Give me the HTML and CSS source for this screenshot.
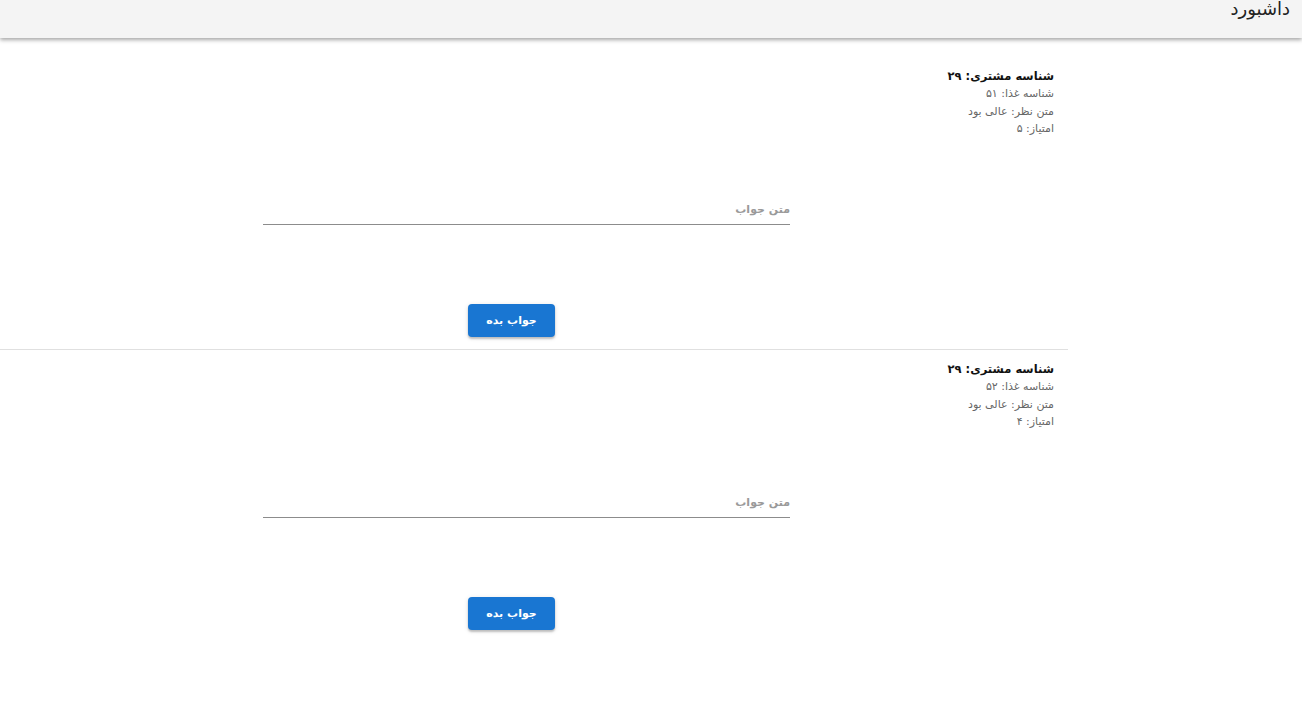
FILE: index.html
```html
<!DOCTYPE html>
<html lang="fa" dir="rtl">
<head>
<meta charset="utf-8">
<title>داشبورد</title>
<link rel="stylesheet" href="styles.css">
</head>
<body>
<header class="topbar">
  <h1 class="topbar-title">داشبورد</h1>
</header>
<main class="list">
  <section class="item">
    <div class="info">
      <div class="info-title">شناسه مشتری: ۲۹</div>
      <div class="info-line">شناسه غذا: ۵۱</div>
      <div class="info-line">متن نظر: عالی بود</div>
      <div class="info-line">امتیاز: ۵</div>
    </div>
    <form class="reply">
      <input class="reply-input" type="text" placeholder="متن جواب">
      <button class="reply-btn" type="button">جواب بده</button>
    </form>
  </section>
  <section class="item">
    <div class="info">
      <div class="info-title">شناسه مشتری: ۲۹</div>
      <div class="info-line">شناسه غذا: ۵۲</div>
      <div class="info-line">متن نظر: عالی بود</div>
      <div class="info-line">امتیاز: ۴</div>
    </div>
    <form class="reply">
      <input class="reply-input" type="text" placeholder="متن جواب">
      <button class="reply-btn" type="button">جواب بده</button>
    </form>
  </section>
</main>
</body>
</html>
```
FILE: styles.css
```css
* { box-sizing: border-box; }
html, body {
  margin: 0;
  padding: 0;
  background: #ffffff;
  font-family: "DejaVu Sans", "Noto Sans", sans-serif;
  color: #222;
}
.topbar {
  height: 38px;
  background: #f4f4f4;
  box-shadow: 0 2px 4px rgba(0,0,0,0.35);
  padding: 0 12px 0 0;
  position: relative;
  z-index: 2;
}
.topbar-title {
  margin: 0;
  font-size: 18px;
  font-weight: normal;
  line-height: 17px;
  color: #222;
}
.list {
  width: 1068px;
  margin-left: 0;
  margin-right: auto;
  padding-top: 19px;
}
.item {
  display: flex;
  flex-direction: row;
  align-items: flex-start;
  padding: 10px 14px 12px 0;
  border-bottom: 1px solid #e0e0e0;
}
.item:last-child { border-bottom: none; }
.info {
  width: 264px;
  text-align: right;
}
.info-title {
  font-size: 11.5px;
  font-weight: bold;
  line-height: 18px;
  color: #111;
}
.info-line {
  font-size: 11px;
  line-height: 17.5px;
  color: #666;
}
.reply {
  width: 527px;
  display: flex;
  flex-direction: column;
  padding-top: 130px;
  margin: 0;
}
.reply-input {
  direction: rtl;
  width: 100%;
  height: 28px;
  border: none;
  border-bottom: 1px solid #8c8c8c;
  outline: none;
  padding: 4px 0 6px;
  font-family: inherit;
  font-size: 11px;
  font-weight: bold;
  background: transparent;
}
.reply-input::placeholder { color: #9a9a9a; }
.reply-btn {
  align-self: flex-end;
  margin-left: 205px;
  margin-top: 79px;
  width: 87px;
  height: 33px;
  border: none;
  border-radius: 4px;
  background: #1976d2;
  color: #fff;
  font-family: inherit;
  font-size: 11px;
  font-weight: bold;
  box-shadow: 0 2px 2px rgba(0,0,0,0.2), 0 1px 5px rgba(0,0,0,0.12);
}
```
